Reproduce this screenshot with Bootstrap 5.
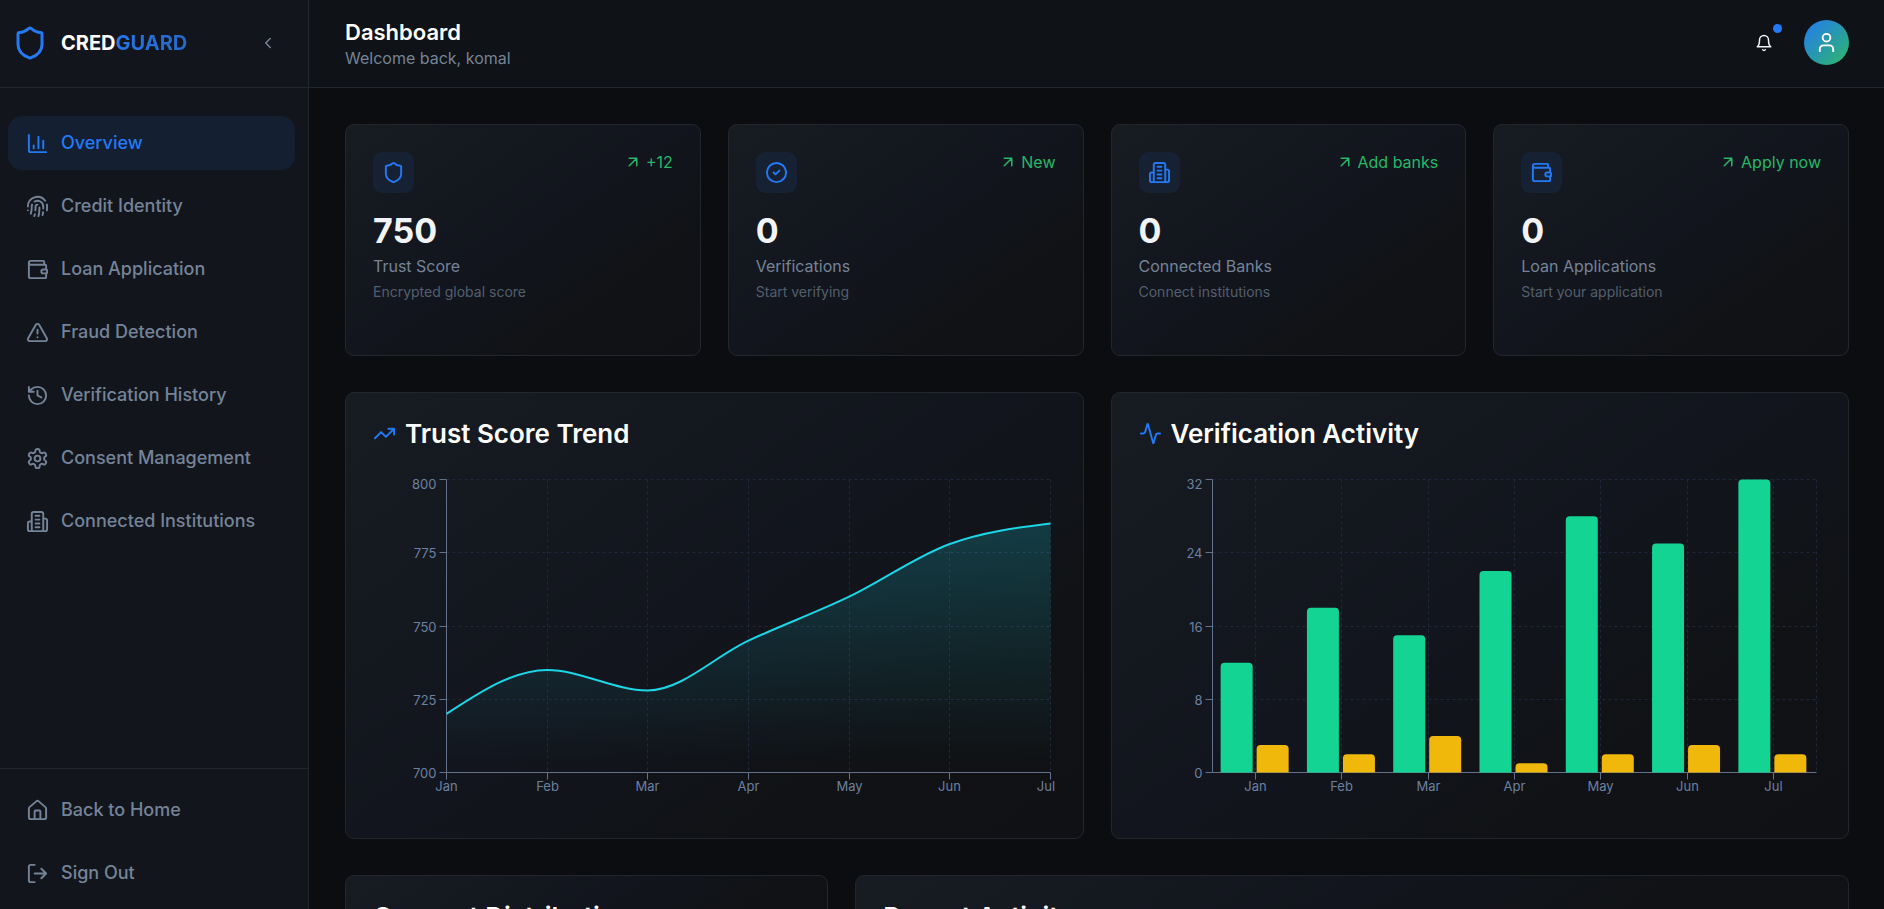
<!DOCTYPE html>
<html lang="en" data-bs-theme="dark">
<head>
<meta charset="utf-8">
<meta name="viewport" content="width=device-width, initial-scale=1">
<title>CredGuard – Dashboard</title>
<link href="https://cdn.jsdelivr.net/npm/bootstrap@5.3.0/dist/css/bootstrap.min.css" rel="stylesheet">
<style>
  :root {
    --cg-primary: #2479f5;
    --cg-muted: #758398;
    --cg-faint: #535f6e;
    --cg-line: #22262d;
    --cg-ok: #26b868;
  }
  body { background: #0c0d10; color: #f1f3f6; font-family: Inter, "Liberation Sans", sans-serif; font-size: 16px; line-height: 24px; }
  .ico { width: 23px; height: 23px; flex: none; fill: none; stroke: currentColor; stroke-width: 2; stroke-linecap: round; stroke-linejoin: round; }
  .ico-sm { width: 18px; height: 18px; }
  .ico-lg { width: 36px; height: 36px; }

  .side { width: 309px; background: #12151c; border-right: 1px solid var(--cg-line); }
  .topline { height: 88px; border-bottom: 1px solid var(--cg-line); }
  .side .topline { padding: 0 31px 2px 12px; }
  .logo { gap: 13px; font-size: 20px; font-weight: 700; color: #fff; }
  .logo .ico { color: var(--cg-primary); }
  .logo-tail { background: linear-gradient(90deg, #2576ed, #2768c4); -webkit-background-clip: text; background-clip: text; color: transparent; }
  .btn-plain { --bs-btn-padding-x: 0; --bs-btn-padding-y: 0; --bs-btn-border-width: 0; line-height: 1; }
  .fold { color: var(--cg-muted); width: 18px; height: 18px; }
  .side-nav { padding: 28px 13px 0 8px; gap: 9px; }
  .side-foot { padding: 14px 13px 9px 8px; gap: 9px; border-top: 1px solid var(--cg-line); }
  .side .nav-link { height: 54px; padding: 0 18px; gap: 12px; border-radius: 14px; font-size: 18px; font-weight: 500; color: var(--cg-muted); }
  .side .nav-link.active { background: #141f31; color: var(--cg-primary); }

  .bar { background: #0f1216; padding: 0 35px 2px 36px; }
  .bar h1 { font-size: 22px; line-height: 30px; font-weight: 600; }
  .bar p { color: var(--cg-muted); line-height: 22px; }
  .bar-tools { gap: 18px; }
  .bell { width: 45px; height: 45px; color: #f1f3f6; }
  .bell-dot { position: absolute; top: 4px; right: 4px; width: 9px; height: 9px; border-radius: 50%; background: var(--cg-primary); }
  .face { width: 45px; height: 45px; color: #fff; background: linear-gradient(135deg, #2479f5, #2db866); }

  .page { padding: 36px 35px 36px 36px; gap: 36px; scrollbar-width: none; }
  .tiles { display: grid; gap: 27px; grid-template-columns: repeat(4, minmax(0, 1fr)); }
  .tiles-2 { grid-template-columns: repeat(2, minmax(0, 1fr)); }
  .tiles-3 { grid-template-columns: repeat(3, minmax(0, 1fr)); }
  .tile-wide { grid-column: span 2; }
  .panel { background: linear-gradient(145deg, #171b22 0%, #12151d 50%, #101215 75%, #101114 100%); border: 1px solid var(--cg-line); border-radius: 9px; padding: 27px; }
  .panel-stat { padding-bottom: 54px; }
  .chip { width: 41px; height: 41px; border-radius: 9px; background: #162133; color: var(--cg-primary); }
  .trend { gap: 4px; height: 20px; color: var(--cg-ok); font-size: 16px; }
  .figure-num { font-size: 34px; line-height: 40px; font-weight: 700; margin-top: 18px; }
  .stat-name { color: var(--cg-muted); margin-top: 3px; }
  .stat-note { color: var(--cg-faint); font-size: 14px; line-height: 18px; margin-top: 5px; }
  .panel h2 { font-size: 26px; line-height: 27px; font-weight: 600; gap: 9px; margin: 0; }
  .panel h2 .ico { color: var(--cg-primary); }
  .plot { height: 337px; margin-top: 27px; }
  .plot svg { display: block; width: 100%; height: 100%; overflow: visible; }
  .plot text { font-size: 13px; fill: #6c80a1; }
  .plot .grid-line { stroke: #21273a; stroke-dasharray: 3 3; }
  .plot .axis-line { stroke: #62728b; }
</style>
</head>
<body>
<svg class="d-none" aria-hidden="true">
  <symbol id="shield" viewBox="0 0 24 24"><path d="M20 13c0 5-3.5 7.5-7.66 8.95a1 1 0 0 1-.67-.01C7.5 20.5 4 18 4 13V6a1 1 0 0 1 1-1c2 0 4.5-1.2 6.24-2.72a1.17 1.17 0 0 1 1.52 0C14.51 3.81 17 5 19 5a1 1 0 0 1 1 1z"/></symbol>
  <symbol id="chevron" viewBox="0 0 24 24"><path d="m15 18-6-6 6-6"/></symbol>
  <symbol id="chart" viewBox="0 0 24 24"><path d="M3 3v16a2 2 0 0 0 2 2h16M18 17V9M13 17V5M8 17v-3"/></symbol>
  <symbol id="finger" viewBox="0 0 24 24"><path d="M12 10a2 2 0 0 0-2 2c0 1.02-.1 2.51-.26 4M14 13.12c0 2.38 0 6.38-1 8.88M17.29 21.02c.12-.6.43-2.3.5-3.02M2 12a10 10 0 0 1 18-6M2 16h.01M21.8 16c.2-2 .131-5.354 0-6M5 19.5C5.5 18 6 15 6 12a6 6 0 0 1 .34-2M8.65 22c.21-.66.45-1.32.57-2M9 6.8a6 6 0 0 1 9 5.2v2"/></symbol>
  <symbol id="wallet" viewBox="0 0 24 24"><path d="M19 7V4a1 1 0 0 0-1-1H5a2 2 0 0 0 0 4h15a1 1 0 0 1 1 1v4h-3a2 2 0 0 0 0 4h3a1 1 0 0 0 1-1v-2a1 1 0 0 0-1-1"/><path d="M3 5v14a2 2 0 0 0 2 2h15a1 1 0 0 0 1-1v-4"/></symbol>
  <symbol id="alert" viewBox="0 0 24 24"><path d="m21.73 18-8-14a2 2 0 0 0-3.48 0l-8 14A2 2 0 0 0 4 21h16a2 2 0 0 0 1.73-3M12 9v4M12 17h.01"/></symbol>
  <symbol id="history" viewBox="0 0 24 24"><path d="M3 12a9 9 0 1 0 9-9 9.75 9.75 0 0 0-6.74 2.74L3 8M3 3v5h5M12 7v5l4 2"/></symbol>
  <symbol id="gear" viewBox="0 0 24 24"><path d="M12.22 2h-.44a2 2 0 0 0-2 2v.18a2 2 0 0 1-1 1.73l-.43.25a2 2 0 0 1-2 0l-.15-.08a2 2 0 0 0-2.73.73l-.22.38a2 2 0 0 0 .73 2.73l.15.1a2 2 0 0 1 1 1.72v.51a2 2 0 0 1-1 1.74l-.15.09a2 2 0 0 0-.73 2.73l.22.38a2 2 0 0 0 2.73.73l.15-.08a2 2 0 0 1 2 0l.43.25a2 2 0 0 1 1 1.73V20a2 2 0 0 0 2 2h.44a2 2 0 0 0 2-2v-.18a2 2 0 0 1 1-1.73l.43-.25a2 2 0 0 1 2 0l.15.08a2 2 0 0 0 2.73-.73l.22-.39a2 2 0 0 0-.73-2.73l-.15-.08a2 2 0 0 1-1-1.74v-.5a2 2 0 0 1 1-1.74l.15-.09a2 2 0 0 0 .73-2.73l-.22-.38a2 2 0 0 0-2.73-.73l-.15.08a2 2 0 0 1-2 0l-.43-.25a2 2 0 0 1-1-1.73V4a2 2 0 0 0-2-2z"/><circle cx="12" cy="12" r="3"/></symbol>
  <symbol id="building" viewBox="0 0 24 24"><path d="M6 22V4a2 2 0 0 1 2-2h8a2 2 0 0 1 2 2v18ZM6 12H4a2 2 0 0 0-2 2v6a2 2 0 0 0 2 2h2M18 9h2a2 2 0 0 1 2 2v9a2 2 0 0 1-2 2h-2M10 6h4M10 10h4M10 14h4M10 18h4"/></symbol>
  <symbol id="house" viewBox="0 0 24 24"><path d="M15 21v-8a1 1 0 0 0-1-1h-4a1 1 0 0 0-1 1v8"/><path d="M3 10a2 2 0 0 1 .709-1.528l7-5.999a2 2 0 0 1 2.582 0l7 5.999A2 2 0 0 1 21 10v9a2 2 0 0 1-2 2H5a2 2 0 0 1-2-2z"/></symbol>
  <symbol id="logout" viewBox="0 0 24 24"><path d="M9 21H5a2 2 0 0 1-2-2V5a2 2 0 0 1 2-2h4M16 17l5-5-5-5M21 12H9"/></symbol>
  <symbol id="bell" viewBox="0 0 24 24"><path d="M6 8a6 6 0 0 1 12 0c0 7 3 9 3 9H3s3-2 3-9M10.3 21a1.94 1.94 0 0 0 3.4 0"/></symbol>
  <symbol id="user" viewBox="0 0 24 24"><path d="M19 21v-2a4 4 0 0 0-4-4H9a4 4 0 0 0-4 4v2"/><circle cx="12" cy="7" r="4"/></symbol>
  <symbol id="check" viewBox="0 0 24 24"><circle cx="12" cy="12" r="10"/><path d="m9 12 2 2 4-4"/></symbol>
  <symbol id="arrow" viewBox="0 0 24 24"><path d="M7 7h10v10M7 17 17 7"/></symbol>
  <symbol id="trend" viewBox="0 0 24 24"><path d="m22 7-8.5 8.5-5-5L2 17M16 7h6v6"/></symbol>
  <symbol id="pulse" viewBox="0 0 24 24"><path d="M22 12h-2.48a2 2 0 0 0-1.93 1.46l-2.35 8.36a.25.25 0 0 1-.48 0L9.24 2.18a.25.25 0 0 0-.48 0l-2.35 8.36A2 2 0 0 1 4.49 12H2"/></symbol>
</svg>

<div class="d-flex vh-100 overflow-hidden">
  <aside class="side d-flex flex-column flex-shrink-0">
    <div class="topline d-flex align-items-center justify-content-between flex-shrink-0">
      <a href="#" class="logo d-flex align-items-center text-decoration-none"><svg class="ico ico-lg"><use href="#shield"/></svg><span>CRED<span class="logo-tail">GUARD</span></span></a>
      <button type="button" class="btn btn-plain fold d-flex" aria-label="Collapse sidebar"><svg class="ico ico-sm"><use href="#chevron"/></svg></button>
    </div>
    <nav class="side-nav nav flex-column flex-nowrap flex-grow-1">
      <a href="#" class="nav-link active d-flex align-items-center" aria-current="page"><svg class="ico"><use href="#chart"/></svg>Overview</a>
      <a href="#" class="nav-link d-flex align-items-center"><svg class="ico"><use href="#finger"/></svg>Credit Identity</a>
      <a href="#" class="nav-link d-flex align-items-center"><svg class="ico"><use href="#wallet"/></svg>Loan Application</a>
      <a href="#" class="nav-link d-flex align-items-center"><svg class="ico"><use href="#alert"/></svg>Fraud Detection</a>
      <a href="#" class="nav-link d-flex align-items-center"><svg class="ico"><use href="#history"/></svg>Verification History</a>
      <a href="#" class="nav-link d-flex align-items-center"><svg class="ico"><use href="#gear"/></svg>Consent Management</a>
      <a href="#" class="nav-link d-flex align-items-center"><svg class="ico"><use href="#building"/></svg>Connected Institutions</a>
    </nav>
    <div class="side-foot nav flex-column">
      <a href="#" class="nav-link d-flex align-items-center"><svg class="ico"><use href="#house"/></svg>Back to Home</a>
      <button type="button" class="nav-link d-flex align-items-center border-0 bg-transparent"><svg class="ico"><use href="#logout"/></svg>Sign Out</button>
    </div>
  </aside>

  <div class="d-flex flex-column flex-grow-1 overflow-hidden">
    <header class="bar topline d-flex align-items-center justify-content-between flex-shrink-0">
      <div>
        <h1 class="m-0">Dashboard</h1>
        <p class="m-0">Welcome back, komal</p>
      </div>
      <div class="bar-tools d-flex align-items-center">
        <button type="button" class="btn btn-plain bell position-relative d-flex align-items-center justify-content-center" aria-label="Notifications"><svg class="ico ico-sm"><use href="#bell"/></svg><span class="bell-dot"></span></button>
        <button type="button" class="btn btn-plain face rounded-circle d-flex align-items-center justify-content-center" aria-label="Account"><svg class="ico"><use href="#user"/></svg></button>
      </div>
    </header>

    <main class="page d-flex flex-column flex-grow-1 overflow-auto">
      <section class="tiles flex-shrink-0">
        <article class="panel panel-stat">
          <div class="d-flex justify-content-between align-items-start">
            <span class="chip d-flex align-items-center justify-content-center"><svg class="ico"><use href="#shield"/></svg></span>
            <span class="trend d-flex align-items-center"><svg class="ico ico-sm"><use href="#arrow"/></svg>+12</span>
          </div>
          <div class="figure-num">750</div>
          <div class="stat-name">Trust Score</div>
          <div class="stat-note">Encrypted global score</div>
        </article>
        <article class="panel panel-stat">
          <div class="d-flex justify-content-between align-items-start">
            <span class="chip d-flex align-items-center justify-content-center"><svg class="ico"><use href="#check"/></svg></span>
            <span class="trend d-flex align-items-center"><svg class="ico ico-sm"><use href="#arrow"/></svg>New</span>
          </div>
          <div class="figure-num">0</div>
          <div class="stat-name">Verifications</div>
          <div class="stat-note">Start verifying</div>
        </article>
        <article class="panel panel-stat">
          <div class="d-flex justify-content-between align-items-start">
            <span class="chip d-flex align-items-center justify-content-center"><svg class="ico"><use href="#building"/></svg></span>
            <span class="trend d-flex align-items-center"><svg class="ico ico-sm"><use href="#arrow"/></svg>Add banks</span>
          </div>
          <div class="figure-num">0</div>
          <div class="stat-name">Connected Banks</div>
          <div class="stat-note">Connect institutions</div>
        </article>
        <article class="panel panel-stat">
          <div class="d-flex justify-content-between align-items-start">
            <span class="chip d-flex align-items-center justify-content-center"><svg class="ico"><use href="#wallet"/></svg></span>
            <span class="trend d-flex align-items-center"><svg class="ico ico-sm"><use href="#arrow"/></svg>Apply now</span>
          </div>
          <div class="figure-num">0</div>
          <div class="stat-name">Loan Applications</div>
          <div class="stat-note">Start your application</div>
        </article>
      </section>

      <section class="tiles tiles-2 flex-shrink-0">
        <article class="panel">
          <h2 class="d-flex align-items-center"><svg class="ico"><use href="#trend"/></svg>Trust Score Trend</h2>
          <div class="plot" id="scorePlot"></div>
        </article>
        <article class="panel">
          <h2 class="d-flex align-items-center"><svg class="ico"><use href="#pulse"/></svg>Verification Activity</h2>
          <div class="plot" id="activityPlot"></div>
        </article>
      </section>

      <section class="tiles tiles-3 flex-shrink-0">
        <article class="panel"><h2>Consent Distribution</h2></article>
        <article class="panel tile-wide"><h2>Recent Activity</h2></article>
      </section>
    </main>
  </div>
</div>

<script src="https://cdn.jsdelivr.net/npm/bootstrap@5.3.0/dist/js/bootstrap.bundle.min.js"></script>
<script>
const months = ['Jan', 'Feb', 'Mar', 'Apr', 'May', 'Jun', 'Jul'];
const scores = [720, 735, 728, 745, 760, 778, 785];
const verified = [12, 18, 15, 22, 28, 25, 32];
const flagged = [3, 2, 4, 1, 2, 3, 2];
const pad = { left: 73, right: 6, top: 5, bottom: 39 };

const line = (cls, x1, y1, x2, y2) => `<line class="${cls}" x1="${x1}" y1="${y1}" x2="${x2}" y2="${y2}"/>`;

// Plot area of a chart box, snapped to pixel centres.
function area(box) {
  return { l: pad.left + .5, r: Math.floor(box.clientWidth - pad.right) + .5, t: pad.top + .5, b: box.clientHeight - pad.bottom + .5, w: box.clientWidth };
}
function grid(a, ticks, edges) {
  let s = '';
  ticks.forEach((t, i) => { const y = a.b - (a.b - a.t) * i / (ticks.length - 1); if (i) s += line('grid-line', a.l, Math.floor(y) + .5, a.r, Math.floor(y) + .5); });
  edges.forEach(x => s += line('grid-line', Math.floor(x) + .5, a.t, Math.floor(x) + .5, a.b));
  return s;
}
function axes(a, ticks, xs) {
  let s = line('axis-line', a.l, a.t, a.l, a.b) + line('axis-line', a.l, a.b, a.r, a.b);
  ticks.forEach((t, i) => {
    const y = Math.floor(a.b - (a.b - a.t) * i / (ticks.length - 1)) + .5;
    s += line('axis-line', a.l - 7, y, a.l, y);
    s += `<text x="${a.l - 10}" y="${Math.max(y, 10) + 5}" text-anchor="end">${t}</text>`;
  });
  xs.forEach((x, i) => {
    const tx = Math.floor(x) + .5;
    s += line('axis-line', tx, a.b, tx, a.b + 7);
    s += `<text x="${Math.min(tx, a.w - 10)}" y="${a.b + 18}" text-anchor="middle">${months[i]}</text>`;
  });
  return s;
}
// Monotone cubic path through the points.
function monotone(p) {
  const n = p.length, d = [], m = [];
  for (let i = 0; i < n - 1; i++) d.push((p[i + 1][1] - p[i][1]) / (p[i + 1][0] - p[i][0]));
  for (let i = 1; i < n - 1; i++) m[i] = (Math.sign(d[i - 1]) + Math.sign(d[i])) * Math.min(Math.abs(d[i - 1]), Math.abs(d[i]), Math.abs(d[i - 1] + d[i]) / 4) || 0;
  m[0] = (3 * d[0] - m[1]) / 2;
  m[n - 1] = (3 * d[n - 2] - m[n - 2]) / 2;
  let s = `M${p[0]}`;
  for (let i = 0; i < n - 1; i++) {
    const h = (p[i + 1][0] - p[i][0]) / 3;
    s += `C${p[i][0] + h},${p[i][1] + h * m[i]} ${p[i + 1][0] - h},${p[i + 1][1] - h * m[i + 1]} ${p[i + 1]}`;
  }
  return s;
}
function drawScore(box) {
  const a = area(box), xs = months.map((_, i) => a.l + (a.r - a.l) * i / 6), ticks = [700, 725, 750, 775, 800];
  const curve = monotone(scores.map((v, i) => [xs[i], a.b - (a.b - a.t) * (v - 700) / 100]));
  box.innerHTML = `<svg role="img" aria-label="Trust score by month">
    <defs><linearGradient id="fade" x1="0" y1="0" x2="0" y2="1"><stop offset="5%" stop-color="#1cd5e6" stop-opacity=".2"/><stop offset="95%" stop-color="#1cd5e6" stop-opacity="0"/></linearGradient></defs>
    ${grid(a, ticks, xs.slice(1))}
    <path d="${curve}L${a.r},${a.b}L${a.l},${a.b}Z" fill="url(#fade)"/>
    ${axes(a, ticks, xs)}
    <path d="${curve}" fill="none" stroke="#1cd5e6" stroke-width="2"/></svg>`;
}
function drawActivity(box) {
  const a = area(box), band = (a.r - a.l) / 7, xs = months.map((_, i) => a.l + band * (i + .5)), ticks = [0, 8, 16, 24, 32];
  const bar = (x, v, c) => { const w = 32, h = (a.b - a.t) * v / 32, r = 4; return `<path fill="${c}" d="M${x},${a.b}v${r - h}a${r},${r} 0 0 1 ${r},${-r}h${w - 2 * r}a${r},${r} 0 0 1 ${r},${r}v${h - r}z"/>`; };
  box.innerHTML = `<svg role="img" aria-label="Verifications and alerts by month">
    ${grid(a, ticks, [...xs, a.r])}${axes(a, ticks, xs)}
    ${xs.map((x, i) => bar(x - 35, verified[i], '#14d494') + bar(x + 1, flagged[i], '#f1b80c')).join('')}</svg>`;
}
function draw() {
  drawScore(document.getElementById('scorePlot'));
  drawActivity(document.getElementById('activityPlot'));
}
draw();
addEventListener('resize', draw);
</script>
</body>
</html>
